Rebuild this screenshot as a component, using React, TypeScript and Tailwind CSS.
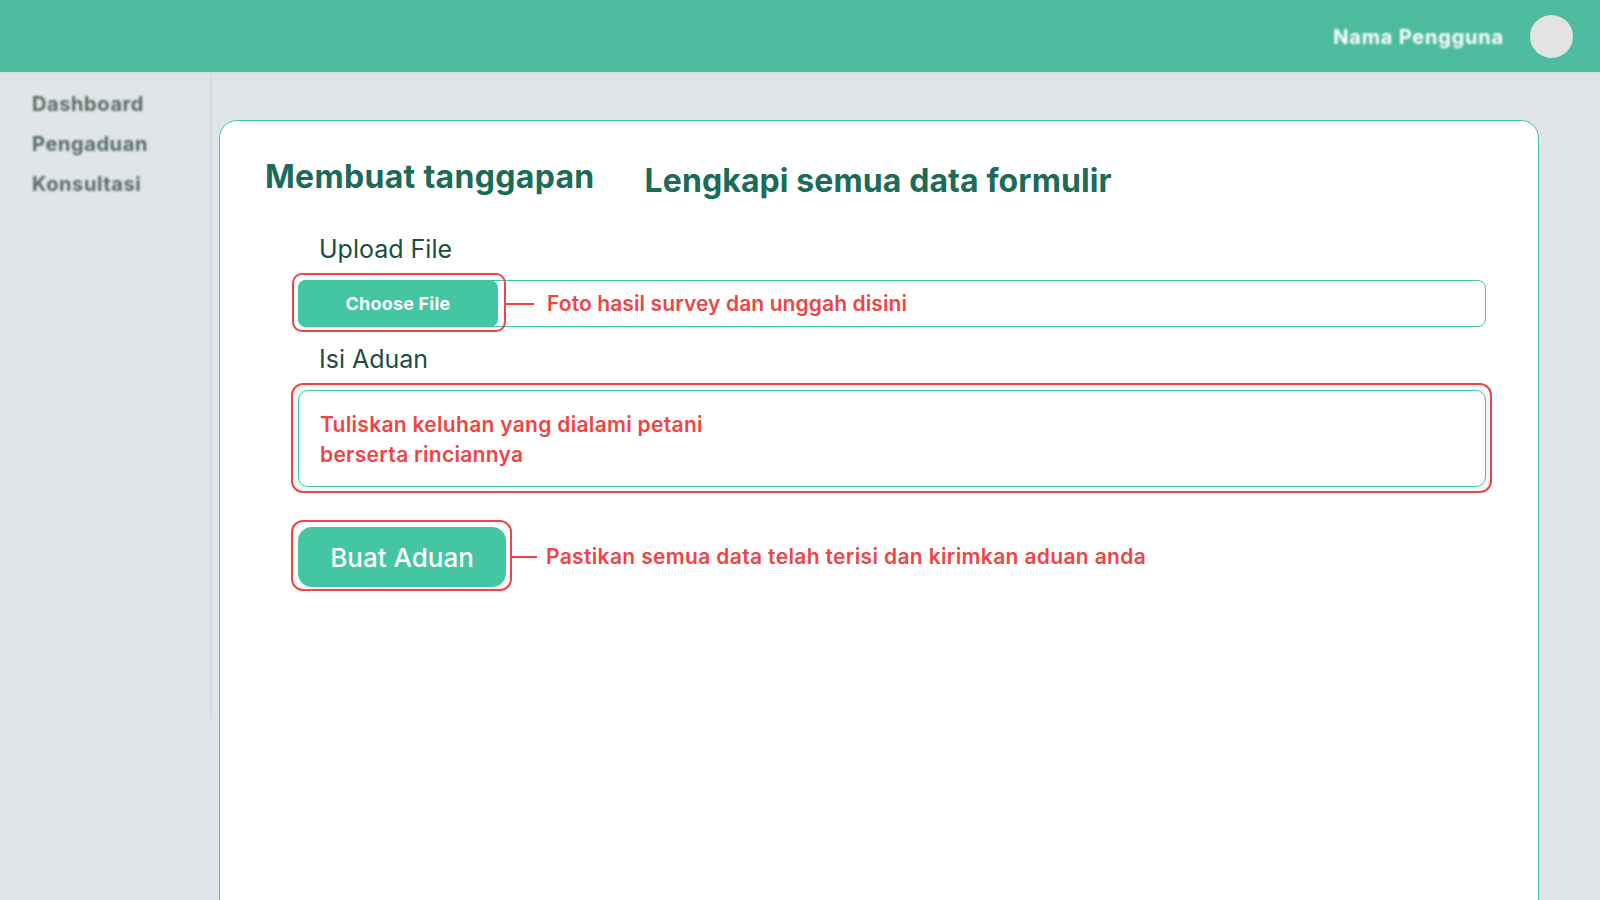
import React from 'react';

const menu = ['Dashboard', 'Pengaduan', 'Konsultasi'];

const App: React.FC = () => {
  return (
    <div className="h-[900px] w-[1600px] overflow-hidden bg-[#dfe5e8] font-['Inter',sans-serif] flex flex-col">
      <header className="h-[72px] shrink-0 bg-[#4dbb9e] flex items-center justify-end pr-[27px] shadow-[0_1px_3px_rgba(0,0,0,0.06)]">
        <span className="text-white font-bold text-[20px] tracking-[0.8px] blur-[1px] mr-[26px] mt-[1px]">Nama Pengguna</span>
        <div className="w-[43px] h-[43px] rounded-full bg-[#e3e3e3] blur-[0.6px]" />
      </header>

      <div className="flex flex-1 min-h-0">
        <aside className="w-[210px] shrink-0 h-[648px] shadow-[3px_0_4px_-2px_rgba(0,0,0,0.07)] pt-[12px] pl-[32px]">
          <ul className="flex flex-col">
            {menu.map((m) => (
              <li key={m} className="h-[40px] flex items-center text-[20px] font-bold tracking-[0.6px] text-[#576b63] blur-[1px]">
                {m}
              </li>
            ))}
          </ul>
        </aside>

        <main className="flex-1 pt-[48px] pl-[9px] pr-[61px]">
          <div className="h-[820px] rounded-[18px] border border-[#43c6a0] bg-white pt-[37px] pl-[45px]">
            <div className="flex items-start gap-[50px]">
              <h1 className="text-[32px] leading-[38px] font-bold tracking-[0.3px] text-[#1b6b57]">Membuat tanggapan</h1>
              <h2 className="text-[32px] leading-[38px] font-bold tracking-[0.1px] text-[#1b6b57] mt-[4px]">Lengkapi semua data formulir</h2>
            </div>

            <div className="ml-[33px] w-[1188px]">
              <p className="mt-[34px] pl-[21px] text-[25px] leading-[30px] text-[#1d4d40]">Upload File</p>

              <div className="relative mt-[16px] h-[47px] flex items-center border border-[#43c6a0] rounded-lg">
                <div className="absolute -left-[7px] -top-[8px] w-[214px] h-[59px] border-2 border-[#ef4444] rounded-[10px]" />
                <button className="relative -ml-px w-[200px] h-[47px] rounded-lg bg-[#43c6a1] text-white text-[18px] font-bold tracking-[0.2px]">
                  Choose File
                </button>
                <div className="ml-[8px] w-[28px] h-[2px] bg-[#ef4444]" />
                <span className="ml-[13px] text-[21px] tracking-[0.1px] font-semibold text-[#ef4444]">Foto hasil survey dan unggah disini</span>
              </div>

              <p className="mt-[17px] pl-[21px] text-[25px] leading-[30px] text-[#1d4d40]">Isi Aduan</p>

              <div className="relative mt-[16px]">
                <div className="absolute -left-[7px] -top-[7px] -right-[6px] -bottom-[6px] border-2 border-[#ef4444] rounded-[12px] bg-[#eff9fa]" />
                <div className="relative h-[97px] border border-[#43c6a0] rounded-[10px] bg-white pl-[21px] pt-[19px] text-[21px] tracking-[0.3px] leading-[30px] font-semibold text-[#ef4444]">
                  Tuliskan keluhan yang dialami petani
                  <br />
                  berserta rinciannya
                </div>
              </div>

              <div className="mt-[40px] flex items-center">
                <div className="relative">
                  <div className="absolute -left-[7px] -top-[7px] w-[221px] h-[71px] border-2 border-[#ef4444] rounded-[12px]" />
                  <button className="relative w-[208px] h-[60px] rounded-[14px] bg-[#43c6a1] text-white text-[26px] font-medium">
                    Buat Aduan
                  </button>
                </div>
                <div className="ml-[6px] w-[25px] h-[2px] bg-[#ef4444]" />
                <span className="ml-[9px] text-[21px] tracking-[0.35px] font-semibold text-[#ef4444]">
                  Pastikan semua data telah terisi dan kirimkan aduan anda
                </span>
              </div>
            </div>
          </div>
        </main>
      </div>
    </div>
  );
};

export default App;
